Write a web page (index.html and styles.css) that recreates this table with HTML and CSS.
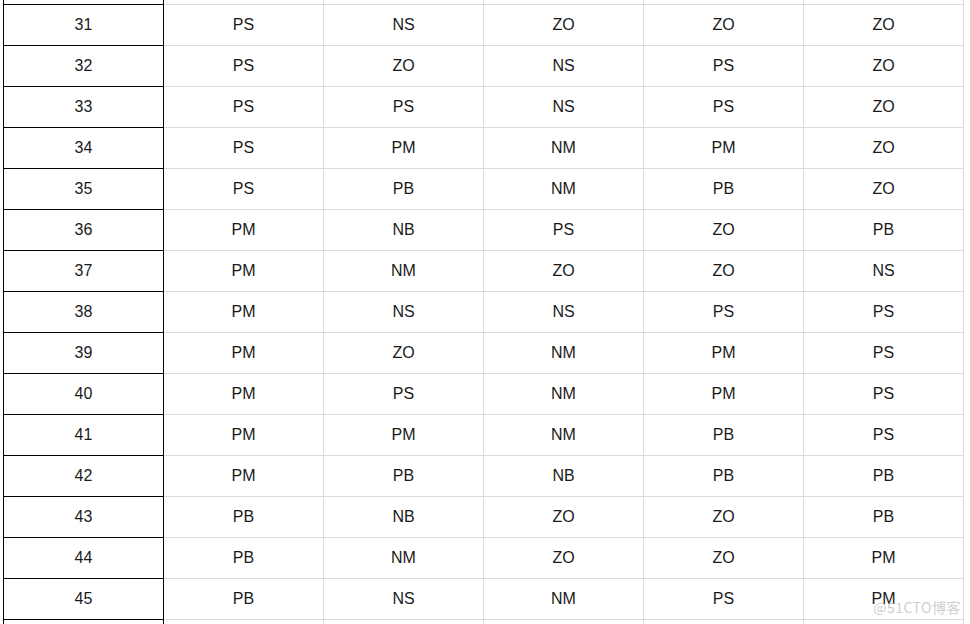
FILE: index.html
```html
<!DOCTYPE html>
<html>
<head>
<meta charset="utf-8">
<link rel="stylesheet" href="styles.css">
</head>
<body>
<div class="sheet">
<table class="grid">
<colgroup><col class="c"><col class="c"><col class="c"><col class="c"><col class="c"><col class="c"></colgroup>
<tbody>
<tr><td class="idx"></td><td></td><td></td><td></td><td></td><td></td></tr>
<tr><td class="idx">31</td><td>PS</td><td>NS</td><td>ZO</td><td>ZO</td><td>ZO</td></tr>
<tr><td class="idx">32</td><td>PS</td><td>ZO</td><td>NS</td><td>PS</td><td>ZO</td></tr>
<tr><td class="idx">33</td><td>PS</td><td>PS</td><td>NS</td><td>PS</td><td>ZO</td></tr>
<tr><td class="idx">34</td><td>PS</td><td>PM</td><td>NM</td><td>PM</td><td>ZO</td></tr>
<tr><td class="idx">35</td><td>PS</td><td>PB</td><td>NM</td><td>PB</td><td>ZO</td></tr>
<tr><td class="idx">36</td><td>PM</td><td>NB</td><td>PS</td><td>ZO</td><td>PB</td></tr>
<tr><td class="idx">37</td><td>PM</td><td>NM</td><td>ZO</td><td>ZO</td><td>NS</td></tr>
<tr><td class="idx">38</td><td>PM</td><td>NS</td><td>NS</td><td>PS</td><td>PS</td></tr>
<tr><td class="idx">39</td><td>PM</td><td>ZO</td><td>NM</td><td>PM</td><td>PS</td></tr>
<tr><td class="idx">40</td><td>PM</td><td>PS</td><td>NM</td><td>PM</td><td>PS</td></tr>
<tr><td class="idx">41</td><td>PM</td><td>PM</td><td>NM</td><td>PB</td><td>PS</td></tr>
<tr><td class="idx">42</td><td>PM</td><td>PB</td><td>NB</td><td>PB</td><td>PB</td></tr>
<tr><td class="idx">43</td><td>PB</td><td>NB</td><td>ZO</td><td>ZO</td><td>PB</td></tr>
<tr><td class="idx">44</td><td>PB</td><td>NM</td><td>ZO</td><td>ZO</td><td>PM</td></tr>
<tr><td class="idx">45</td><td>PB</td><td>NS</td><td>NM</td><td>PS</td><td>PM</td></tr>
<tr><td class="idx"></td><td></td><td></td><td></td><td></td><td></td></tr>
</tbody>
</table>
<div class="watermark">@51CTO博客</div>
</div>
</body>
</html>
```
FILE: styles.css
```css
html, body {
  margin: 0;
  padding: 0;
  background: #ffffff;
  overflow: hidden;
  height: 624px;
}
.sheet {
  position: relative;
  height: 624px;
  overflow: hidden;
  padding-left: 3px;
}
.grid {
  border-collapse: collapse;
  table-layout: fixed;
  width: 961px;
  margin-top: -37px;
  font-family: "Liberation Sans", Arial, sans-serif;
  font-size: 16px;
  color: #1a1a1a;
}
.c {
  width: 160px;
}
.grid td {
  height: 40px;
  padding: 0;
  text-align: center;
  vertical-align: middle;
  border: 1px solid #dadada;
  line-height: 18px;
}
.grid td.idx {
  border: 1px solid #000000;
}
.watermark {
  position: absolute;
  right: 9px;
  bottom: 9px;
  font-family: "Noto Sans CJK SC", "Liberation Sans", sans-serif;
  font-size: 14px;
  line-height: 16px;
  color: rgba(190, 190, 190, 0.75);
  letter-spacing: 0.5px;
}
```
